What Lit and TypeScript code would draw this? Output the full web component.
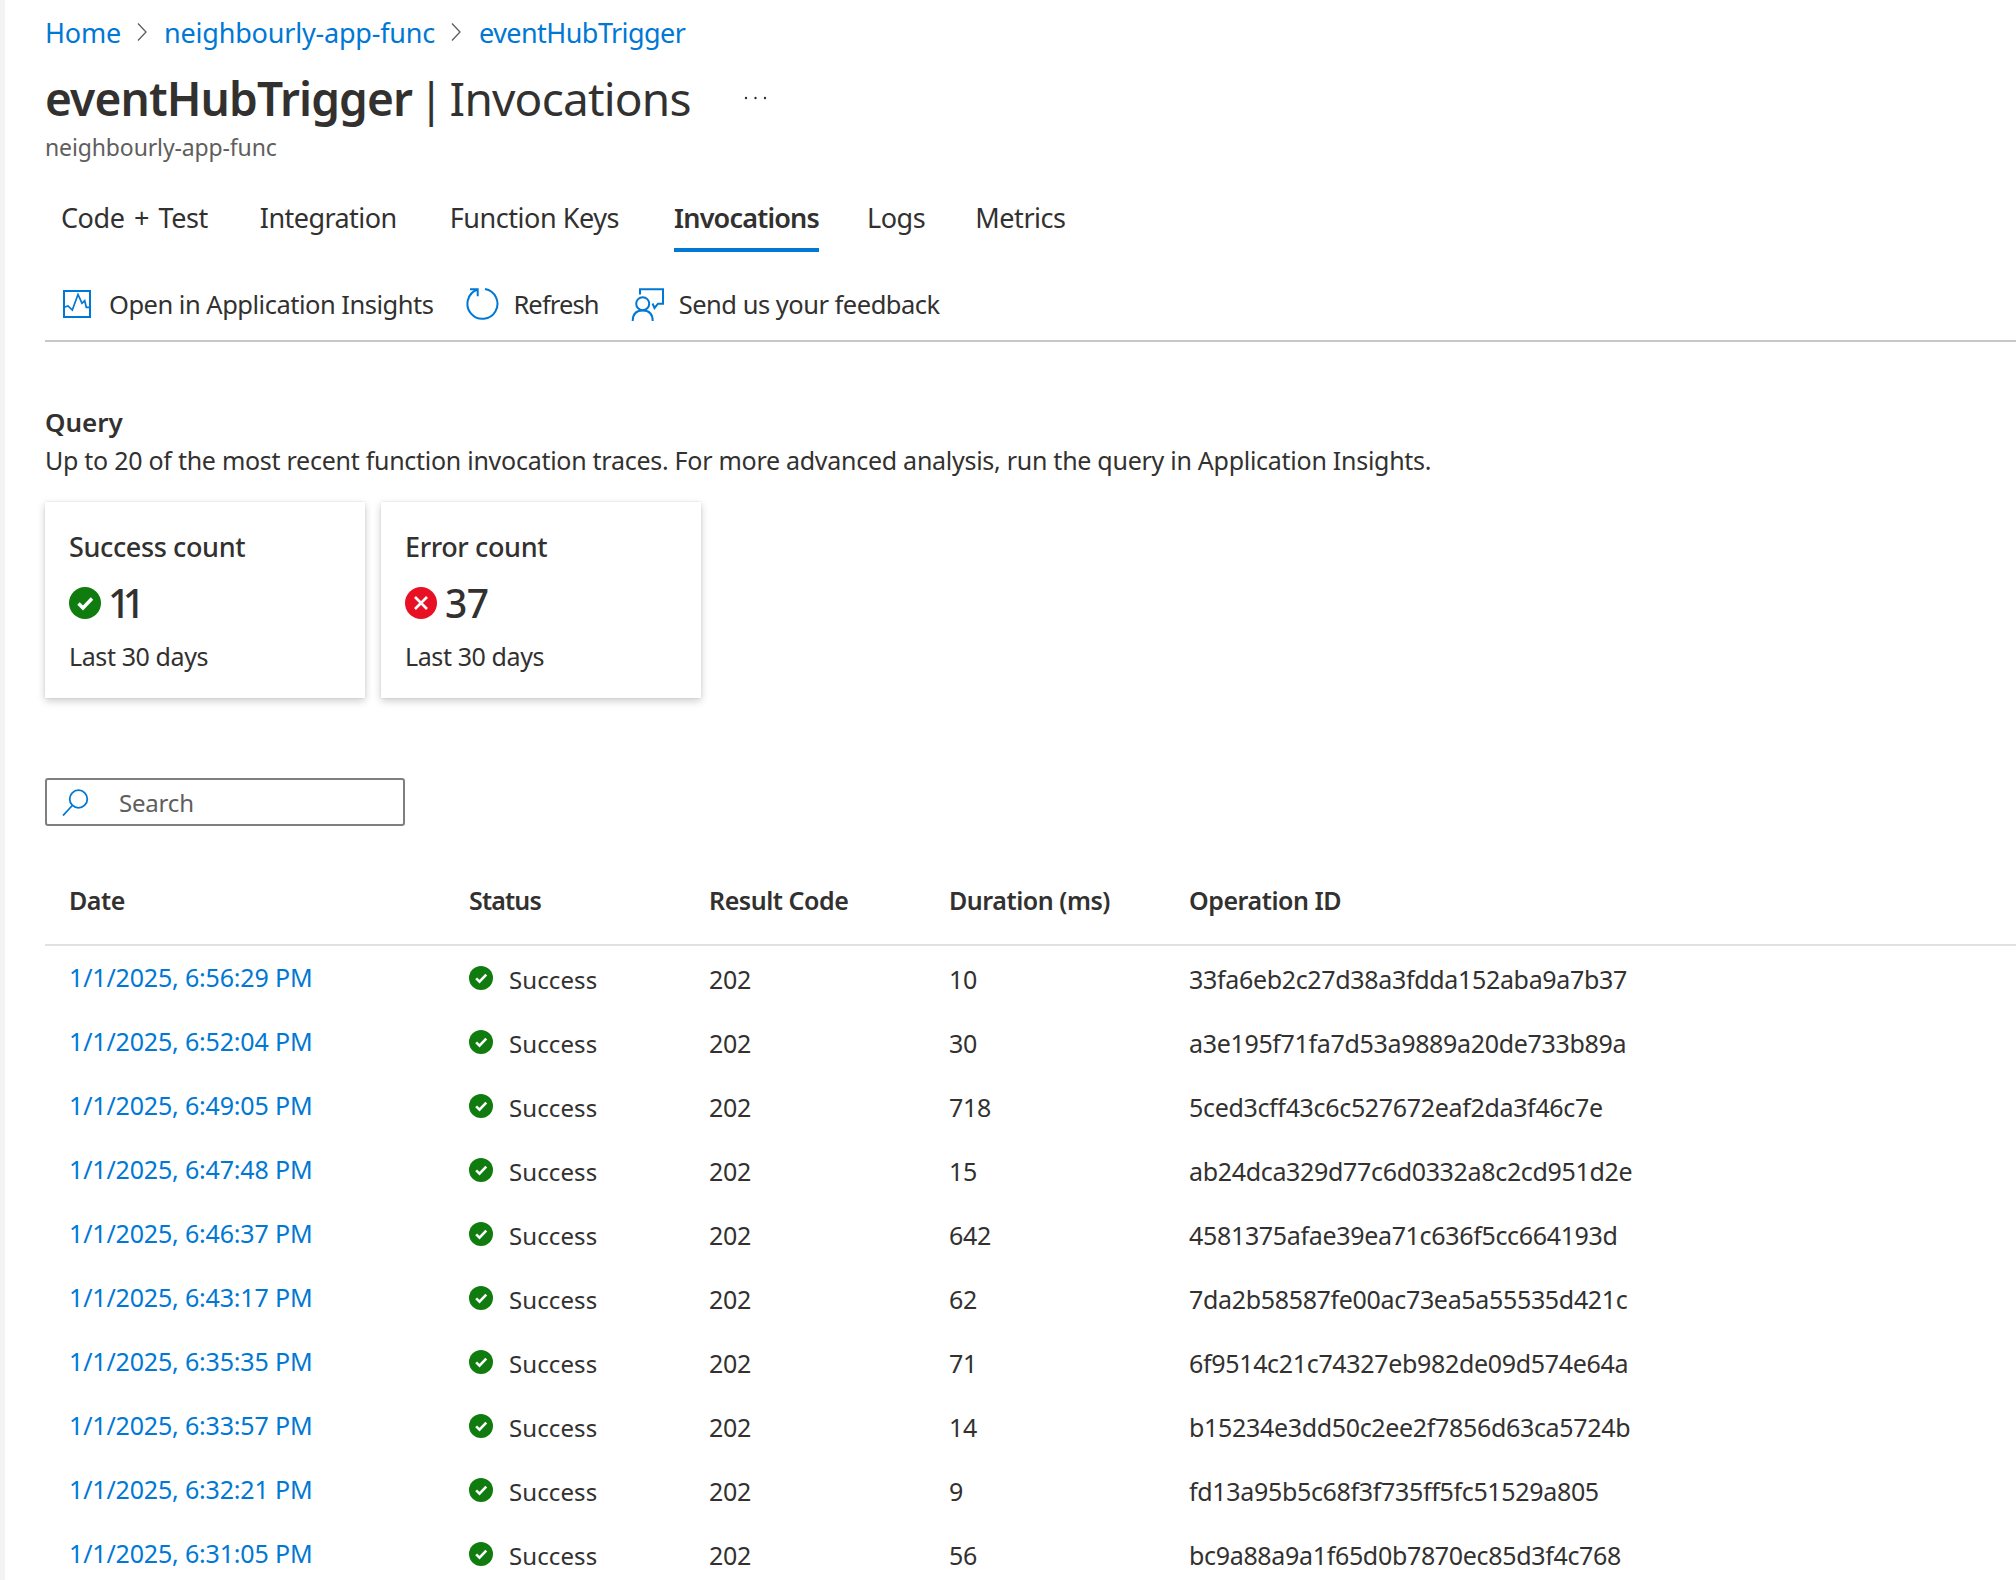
import { LitElement, html, css, svg } from 'lit';
import { customElement } from 'lit/decorators.js';

const ROWS = [
  ['1/1/2025, 6:56:29 PM', '10', '33fa6eb2c27d38a3fdda152aba9a7b37'],
  ['1/1/2025, 6:52:04 PM', '30', 'a3e195f71fa7d53a9889a20de733b89a'],
  ['1/1/2025, 6:49:05 PM', '718', '5ced3cff43c6c527672eaf2da3f46c7e'],
  ['1/1/2025, 6:47:48 PM', '15', 'ab24dca329d77c6d0332a8c2cd951d2e'],
  ['1/1/2025, 6:46:37 PM', '642', '4581375afae39ea71c636f5cc664193d'],
  ['1/1/2025, 6:43:17 PM', '62', '7da2b58587fe00ac73ea5a55535d421c'],
  ['1/1/2025, 6:35:35 PM', '71', '6f9514c21c74327eb982de09d574e64a'],
  ['1/1/2025, 6:33:57 PM', '14', 'b15234e3dd50c2ee2f7856d63ca5724b'],
  ['1/1/2025, 6:32:21 PM', '9', 'fd13a95b5c68f3f735ff5fc51529a805'],
  ['1/1/2025, 6:31:05 PM', '56', 'bc9a88a9a1f65d0b7870ec85d3f4c768'],
];

const okIcon = (size: number) => html`<svg class="status-icon" width=${size} height=${size} viewBox="0 0 32 32">
  <circle cx="16" cy="16" r="16" fill="#107c10"></circle>
  <path d="M9.500 16.500l4.500 4.500 9-9.500" fill="none" stroke="#fff" stroke-width="3.4"></path>
</svg>`;

const errIcon = (size: number) => html`<svg class="status-icon" width=${size} height=${size} viewBox="0 0 32 32">
  <circle cx="16" cy="16" r="16" fill="#e81123"></circle>
  <path d="M10 10l12 12M22 10l-12 12" fill="none" stroke="#fff" stroke-width="2.6"></path>
</svg>`;

const chevron = html`<svg class="chev" width="12" height="20" viewBox="0 0 12 20">
  <path d="M2 1.500l8 8.500-8 8.500" fill="none" stroke="#605e5c" stroke-width="1.3"></path>
</svg>`;

const insightsIcon = svg`<rect x="1" y="1" width="26" height="26" fill="none" stroke="#0078d4" stroke-width="2"></rect>
  <path d="M1 17.300L5 16l4.300 4L15 4.500l4 8.800 2.700-2.600 1.600 6.600H27" fill="none" stroke="#0078d4" stroke-width="1.7"></path>`;

const refreshIcon = svg`<path d="M11 1.800A15 15 0 1 0 19 1" fill="none" stroke="#0078d4" stroke-width="2"></path>
  <path d="M4 1.300H11.700V8.300" fill="none" stroke="#0078d4" stroke-width="2"></path>`;

const feedbackIcon = svg`<path d="M9 6.500V1.300H32V15.700H27L23.500 20L21.500 15.500" fill="none" stroke="#0078d4" stroke-width="2"></path>
  <circle cx="11.700" cy="15.700" r="6.500" fill="none" stroke="#0078d4" stroke-width="2"></circle>
  <path d="M1.700 33c0-7 4-10.500 10-10.500s10 3.500 10 10.500" fill="none" stroke="#0078d4" stroke-width="2"></path>`;

@customElement('app-root')
export class AppRoot extends LitElement {
  static styles = css`
    :host {
      display: block;
      position: relative;
      height: 1580px;
      overflow: hidden;
      background: #fff;
      border-left: 5px solid #f3f3f3;
      box-sizing: border-box;
      font-family: 'Noto Sans', 'Open Sans', sans-serif;
      font-size: 24px;
      color: #323130;
      letter-spacing: -0.45px;
    }
    .page {
      padding-left: 40px;
    }
    a {
      color: #0078d4;
      text-decoration: none;
    }
    .crumbs {
      height: 64px;
      display: flex;
      align-items: center;
      font-size: 27px;
      letter-spacing: -0.2px;
    }
    .crumbs .last {
      letter-spacing: -0.57px;
      margin-left: 1px;
    }
    .chev {
      margin: 0 16px 0 15px;
    }
    .title-row {
      margin-top: 6px;
      height: 56px;
      display: flex;
      align-items: center;
      font-size: 46px;
      white-space: pre;
      letter-spacing: -0.8px;
    }
    .title-row b {
      font-weight: 600;
      letter-spacing: -0.88px;
    }
    .sep {
      word-spacing: -4.7px;
    }
    .more {
      margin-left: 53px;
    }
    .sub {
      margin-top: 6px;
      height: 32px;
      line-height: 31px;
      color: #605e5c;
      font-size: 23px;
      letter-spacing: -0.13px;
    }
    .tabs {
      margin-top: 24px;
      height: 64px;
      display: flex;
      align-items: stretch;
      font-size: 27px;
    }
    .tab {
      display: flex;
      align-items: center;
      margin-left: 16px;
      margin-right: 37px;
      padding-bottom: 2px;
      border-bottom: 4px solid transparent;
      box-sizing: border-box;
    }
    .tab.first {
      word-spacing: 3px;
      margin-right: 36px;
    }
    .tab.integration {
      letter-spacing: -0.55px;
    }
    .tab.keys {
      margin-right: 39px;
    }
    .tab.logs {
      margin-right: 34px;
    }
    .tab.active {
      font-weight: 600;
      letter-spacing: -0.8px;
      margin-right: 32px;
      border-bottom-color: #0078d4;
    }
    .toolbar {
      height: 90px;
      display: flex;
      align-items: center;
      border-bottom: 2px solid #c8c8c8;
      box-sizing: border-box;
      padding: 16px 0 0 18px;
      font-size: 25.5px;
      letter-spacing: -0.5px;
    }
    .tool {
      display: flex;
      align-items: center;
      margin-right: 32px;
    }
    .tool svg {
      margin-right: 15px;
    }
    .tool.wide {
      margin-right: 33px;
    }
    .tool.wide svg {
      margin-right: 18px;
    }
    .tool.short svg {
      margin-right: 14px;
    }
    .tool.short {
      letter-spacing: -0.87px;
    }
    .query {
      margin-top: 62px;
      font-size: 26px;
      letter-spacing: 0;
      font-weight: 600;
      height: 36px;
      line-height: 36px;
    }
    .desc {
      height: 40px;
      line-height: 40px;
      font-size: 25px;
      letter-spacing: -0.27px;
    }
    .cards {
      margin-top: 22px;
      display: flex;
      gap: 16px;
    }
    .card {
      width: 320px;
      height: 196px;
      box-sizing: border-box;
      padding: 27px 24px 0;
      background: #fff;
      box-shadow: 0 3px 8px rgba(0, 0, 0, 0.2), 0 0 2px rgba(0, 0, 0, 0.1);
    }
    .card-title {
      font-size: 27px;
      letter-spacing: -0.37px;
      font-weight: 500;
      height: 36px;
      line-height: 36px;
    }
    .count {
      margin-top: 10px;
      height: 56px;
      display: flex;
      align-items: center;
      gap: 8px;
      font-size: 39px;
      font-weight: 500;
    }
    .count span {
      line-height: 56px;
    }
    .count .tight {
      letter-spacing: -7.5px;
      margin-left: -1px;
    }
    .card-foot {
      margin-top: 7px;
      line-height: 36px;
      font-size: 25px;
      letter-spacing: -0.4px;
    }
    .search {
      margin-top: 80px;
      width: 360px;
      height: 48px;
      box-sizing: border-box;
      border: 2px solid #7f7f7f;
      border-radius: 3px;
      display: flex;
      align-items: center;
      padding-left: 14px;
      color: #605e5c;
      letter-spacing: -0.2px;
    }
    .search svg {
      margin-right: 30px;
    }
    .thead,
    .row {
      display: grid;
      grid-template-columns: 400px 240px 240px 240px 1fr;
      padding-left: 24px;
      align-items: center;
    }
    .thead {
      margin-top: 36px;
      height: 84px;
      border-bottom: 2px solid #e1e1e1;
      box-sizing: border-box;
      font-weight: 600;
      font-size: 25px;
      padding-bottom: 6px;
    }
    .thead .narrow {
      letter-spacing: -0.85px;
    }
    .rows {
      padding-top: 1px;
    }
    .row {
      height: 64px;
      font-size: 25px;
      letter-spacing: -0.33px;
    }
    .date {
      position: relative;
      top: -2px;
      letter-spacing: -0.17px;
    }
    .status {
      display: flex;
      align-items: center;
      gap: 16px;
      font-size: 24px;
      letter-spacing: 0.1px;
    }
    .status .status-icon {
      position: relative;
      top: -1px;
    }
    .strip-mark {
      position: absolute;
      left: -5px;
      top: 339px;
      width: 5px;
      height: 2px;
      background: #dedede;
    }
  `;

  render() {
    return html`
      <div class="strip-mark"></div>
      <div class="page">
        <nav class="crumbs">
          <a href="#">Home</a>${chevron}<a href="#">neighbourly-app-func</a>${chevron}<a class="last" href="#">eventHubTrigger</a>
        </nav>
        <div class="title-row"><b>eventHubTrigger</b><span class="sep"> | </span>Invocations<svg class="more" width="23" height="6" viewBox="0 0 23 6"><circle cx="2" cy="3" r="1.200" fill="#323130"></circle><circle cx="11.500" cy="3" r="1.200" fill="#323130"></circle><circle cx="21" cy="3" r="1.200" fill="#323130"></circle></svg></div>
        <div class="sub">neighbourly-app-func</div>
        <div class="tabs">
          <div class="tab first">Code + Test</div>
          <div class="tab integration">Integration</div>
          <div class="tab keys">Function Keys</div>
          <div class="tab active">Invocations</div>
          <div class="tab logs">Logs</div>
          <div class="tab">Metrics</div>
        </div>
        <div class="toolbar">
          <div class="tool wide"><svg width="28" height="28" viewBox="0 0 28 28">${insightsIcon}</svg>Open in Application Insights</div>
          <div class="tool short"><svg width="33" height="33" viewBox="0 0 33 33">${refreshIcon}</svg>Refresh</div>
          <div class="tool"><svg width="33" height="33" viewBox="0 0 33 33">${feedbackIcon}</svg>Send us your feedback</div>
        </div>
        <div class="query">Query</div>
        <div class="desc">Up to 20 of the most recent function invocation traces. For more advanced analysis, run the query in Application Insights.</div>
        <div class="cards">
          <div class="card">
            <div class="card-title">Success count</div>
            <div class="count">${okIcon(32)}<span class="tight">11</span></div>
            <div class="card-foot">Last 30 days</div>
          </div>
          <div class="card">
            <div class="card-title">Error count</div>
            <div class="count">${errIcon(32)}<span>37</span></div>
            <div class="card-foot">Last 30 days</div>
          </div>
        </div>
        <div class="search">
          <svg width="28" height="27" viewBox="0 0 28 27">
            <circle cx="17.500" cy="10" r="8.800" fill="none" stroke="#0078d4" stroke-width="1.800"></circle>
            <path d="M11.300 16.500L2 26.500" fill="none" stroke="#0078d4" stroke-width="1.800"></path>
          </svg>
          Search
        </div>
        <div class="thead">
          <div>Date</div>
          <div class="narrow">Status</div>
          <div>Result Code</div>
          <div>Duration (ms)</div>
          <div>Operation ID</div>
        </div>
        <div class="rows">
          ${ROWS.map(
            ([date, ms, id]) => html`
              <div class="row">
                <a class="date" href="#">${date}</a>
                <div class="status">${okIcon(24)}<span>Success</span></div>
                <div>202</div>
                <div>${ms}</div>
                <div>${id}</div>
              </div>
            `,
          )}
        </div>
      </div>
    `;
  }
}
